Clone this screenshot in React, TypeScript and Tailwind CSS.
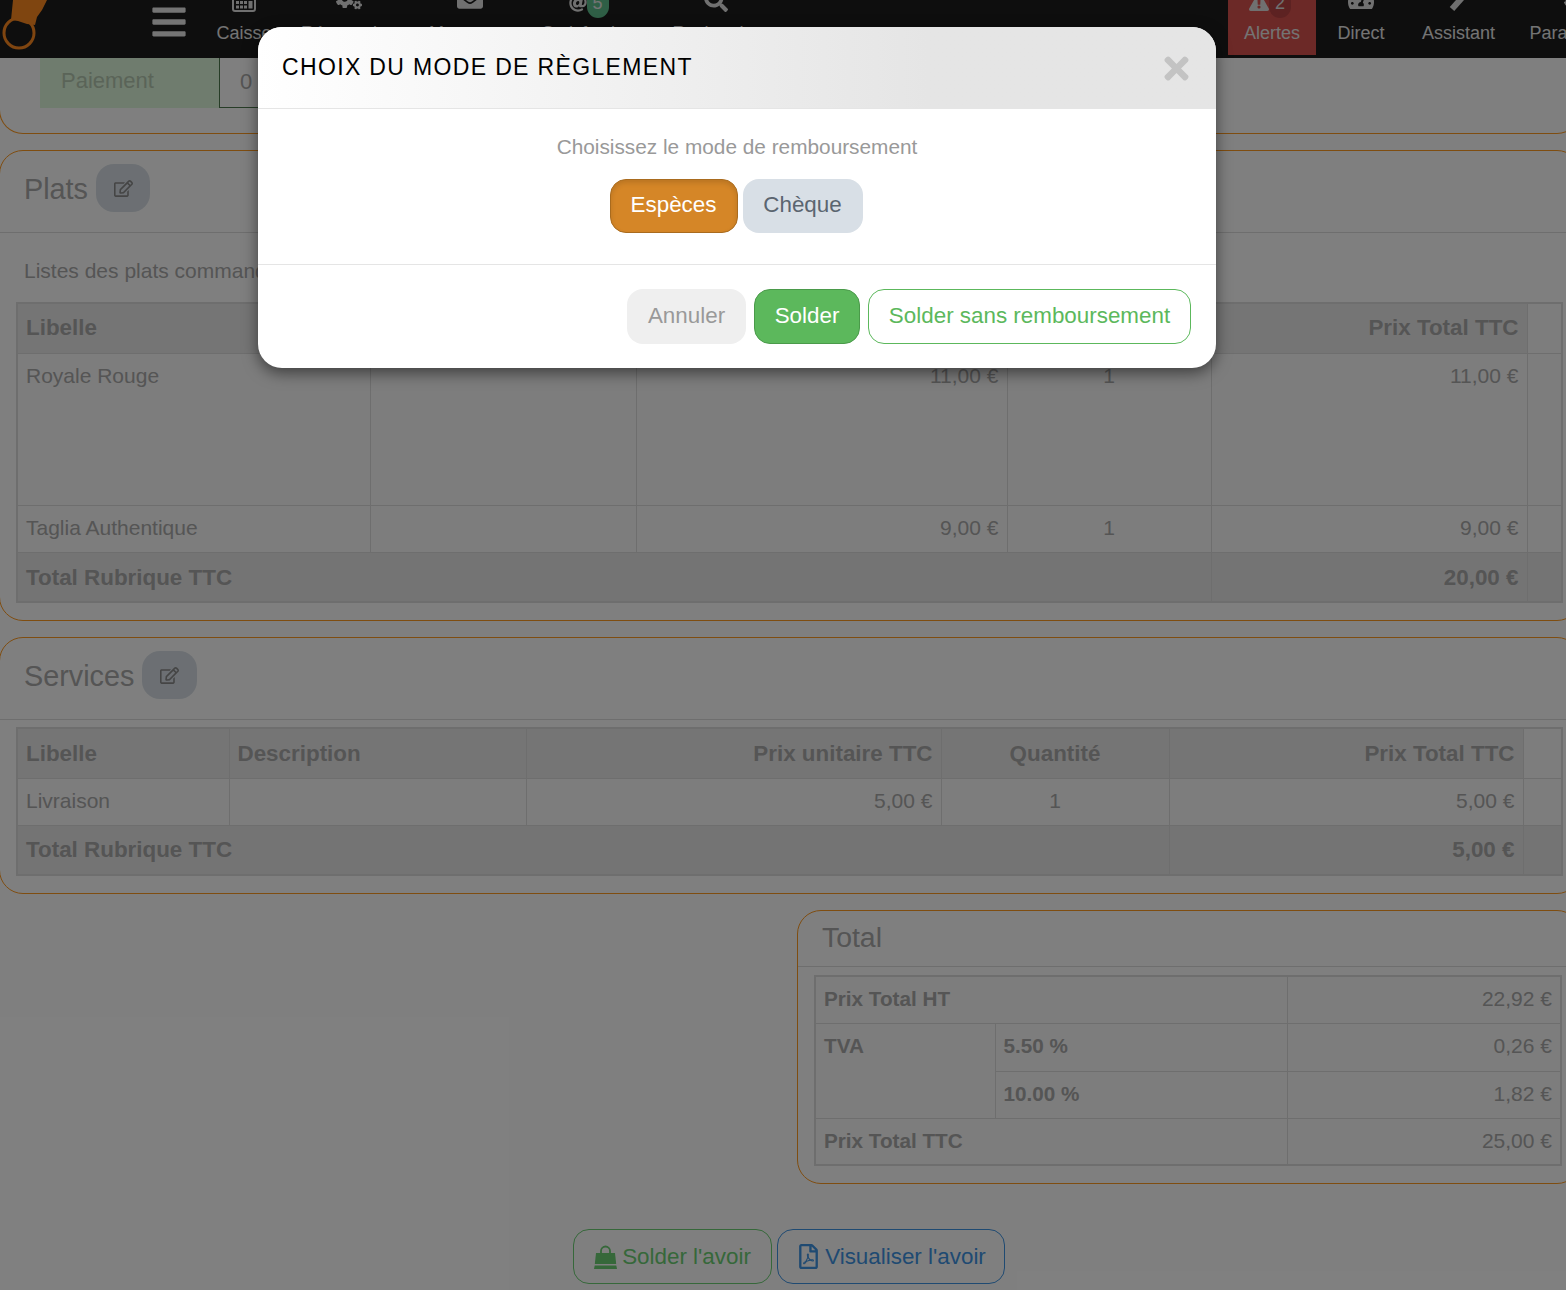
import React from 'react';
import {
  FaAt,
  FaBars,
  FaCogs,
  FaEnvelope,
  FaExclamationTriangle,
  FaRegEdit,
  FaRegFilePdf,
  FaSearch,
  FaTachometerAlt,
  FaTimes,
} from 'react-icons/fa';

const cellBase = 'border border-[#dddddd] px-2 align-middle';
const bodyCell = `${cellBase} pb-[2px]`;
const topCell = `${cellBase} !align-top pt-[7px]`;
const headCell = `${cellBase} bg-[#ebebeb] text-[22.4px] font-bold`;
const totalCell = `${cellBase} bg-[#e9e9e9] text-[22.4px] font-bold`;
const sumLabel = 'text-[20.7px] font-bold';
const tableClass = 'table-fixed border-collapse border-2 border-[#dddddd] bg-[#fafafa] text-[21px] leading-[30px] text-[#aaaaaa]';

const NavItem: React.FC<{ label: string; width: string; active?: boolean; children: React.ReactNode }> = ({ label, width, active, children }) => (
  <div className={`flex h-[55px] shrink-0 flex-col items-center justify-end pb-[11px] ${width} ${active ? 'bg-[#d9534f]' : ''}`}>
    <div className="relative mb-[10px] flex justify-center text-[#e0e0e0]">{children}</div>
    <span className="whitespace-nowrap text-[18px] leading-[22px] text-[#e8e8e8]">{label}</span>
  </div>
);

const Logo = () => (
  <svg width="50" height="58" viewBox="0 0 50 58" className="shrink-0">
    <circle cx="19" cy="33" r="15" fill="none" stroke="#ff8a20" strokeWidth="3" />
    <path d="M13 0 L47 0 L42 10 L37 17 L35 25 L27 24 L18 21 L11 20 Z" fill="#ff8a20" />
  </svg>
);

const CashIcon = () => (
  <svg width="24" height="24" viewBox="0 0 24 24" fill="currentColor">
    <rect x="1" y="1" width="22" height="22" rx="2" fill="none" stroke="currentColor" strokeWidth="2" />
    <rect x="4" y="13" width="3" height="3" />
    <rect x="8" y="13" width="3" height="3" />
    <rect x="12" y="13" width="3" height="3" />
    <rect x="4" y="17.5" width="3" height="3" />
    <rect x="8" y="17.5" width="3" height="3" />
    <rect x="12" y="17.5" width="3" height="3" />
    <rect x="16.5" y="13" width="4" height="7.5" />
  </svg>
);

const WandIcon = () => (
  <svg width="20" height="22" viewBox="0 0 20 22">
    <path d="M19 1 L3 19" stroke="currentColor" strokeWidth="6" />
  </svg>
);

const BagIcon = () => (
  <svg width="23" height="24" viewBox="0 0 23 24" fill="currentColor">
    <path d="M7 9 V6 a4.5 4.5 0 0 1 9 0 V9" fill="none" stroke="currentColor" strokeWidth="1.8" />
    <path d="M2 8 H21 L22.2 19 H0.8 Z" />
    <path d="M0.7 20.5 H22.3 L23 24 H0 Z" />
  </svg>
);

const EditButton: React.FC<{ width: string }> = ({ width }) => (
  <button className={`flex h-12 items-center justify-center rounded-[18px] bg-[#d8dfe6] text-[#8a8a8a] ${width}`}>
    <FaRegEdit size={19} />
  </button>
);

const CardHeader: React.FC<{ title: string; width: string }> = ({ title, width }) => (
  <div className="flex h-[82px] items-start gap-2 border-b border-[#dddddd] pt-[13px] pl-6">
    <h2 className="pt-[9px] text-[28.8px] leading-[32px] font-normal text-[#aaaaaa]">{title}</h2>
    <EditButton width={width} />
  </div>
);

const Nav = () => (
  <nav className="relative flex h-[58px] items-start overflow-hidden bg-[#1c1c1c]">
    <Logo />
    <div className="mt-[3px] w-[150px] shrink-0 pl-[100px] text-[#e8e8e8]">
      <FaBars size={38} />
    </div>
    <NavItem label="Caisse" width="w-[88px]">
      <CashIcon />
    </NavItem>
    <NavItem label="Réservation" width="w-[122px]">
      <FaCogs size={26} />
    </NavItem>
    <NavItem label="Messages" width="w-[120px]">
      <FaEnvelope size={26} />
    </NavItem>
    <NavItem label="Satisfaction" width="w-[117px]">
      <FaAt size={18} className="mr-[22px]" />
      <span className="absolute bottom-[-6px] left-[18px] flex h-[30px] w-[22px] items-center justify-center rounded-[11px] bg-[#5ebe8c] text-[18px] text-[#e8e8e8]">5</span>
    </NavItem>
    <NavItem label="Recherche" width="w-[138px]">
      <FaSearch size={24} />
    </NavItem>
    <div className="ml-[443px] flex gap-[5px]">
      <NavItem label="Alertes" width="w-[88px]" active>
        <FaExclamationTriangle size={20} className="mr-[26px]" />
        <span className="absolute bottom-[-6px] left-[20px] flex h-[30px] w-[22px] items-center justify-center rounded-[11px] bg-[#bb4444] text-[18px] text-[#e0e0e0]">2</span>
      </NavItem>
      <NavItem label="Direct" width="w-[80px]">
        <FaTachometerAlt size={26} />
      </NavItem>
      <NavItem label="Assistant" width="w-[105px]">
        <WandIcon />
      </NavItem>
      <NavItem label="Paramètres" width="w-[120px]">
        <FaCogs size={24} />
      </NavItem>
    </div>
  </nav>
);

const PlatsTable = () => (
  <table className={`${tableClass} ml-[16px] w-[1545px]`}>
    <colgroup>
      <col className="w-[353px]" />
      <col className="w-[266px]" />
      <col className="w-[371px]" />
      <col className="w-[204px]" />
      <col className="w-[316px]" />
      <col className="w-[35px]" />
    </colgroup>
    <tbody>
      <tr className="h-[50px]">
        <th className={`${headCell} text-left`}>Libelle</th>
        <th className={`${headCell} text-left`}>Description</th>
        <th className={`${headCell} text-right`}>Prix unitaire TTC</th>
        <th className={`${headCell} text-center`}>Quantité</th>
        <th className={`${headCell} text-right`}>Prix Total TTC</th>
        <td className={cellBase} />
      </tr>
      <tr className="h-[152px]">
        <td className={topCell}>Royale Rouge</td>
        <td className={cellBase} />
        <td className={`${topCell} text-right`}>11,00 €</td>
        <td className={`${topCell} text-center`}>1</td>
        <td className={`${topCell} text-right`}>11,00 €</td>
        <td className={cellBase} />
      </tr>
      <tr className="h-[47px]">
        <td className={bodyCell}>Taglia Authentique</td>
        <td className={bodyCell} />
        <td className={`${bodyCell} text-right`}>9,00 €</td>
        <td className={`${bodyCell} text-center`}>1</td>
        <td className={`${bodyCell} text-right`}>9,00 €</td>
        <td className={bodyCell} />
      </tr>
      <tr className="h-[50px]">
        <td colSpan={4} className={`${totalCell} pt-[2px]`}>Total Rubrique TTC</td>
        <td className={`${totalCell} pt-[2px] text-right`}>20,00 €</td>
        <td className={totalCell} />
      </tr>
    </tbody>
  </table>
);

const ServicesTable = () => (
  <table className={`${tableClass} ml-[16px] w-[1545px]`}>
    <colgroup>
      <col className="w-[212px]" />
      <col className="w-[297px]" />
      <col className="w-[415px]" />
      <col className="w-[228px]" />
      <col className="w-[354px]" />
      <col className="w-[39px]" />
    </colgroup>
    <tbody>
      <tr className="h-[50px]">
        <th className={`${headCell} pt-[2px] text-left`}>Libelle</th>
        <th className={`${headCell} pt-[2px] text-left`}>Description</th>
        <th className={`${headCell} pt-[2px] text-right`}>Prix unitaire TTC</th>
        <th className={`${headCell} pt-[2px] text-center`}>Quantité</th>
        <th className={`${headCell} pt-[2px] text-right`}>Prix Total TTC</th>
        <td className={cellBase} />
      </tr>
      <tr className="h-[47px]">
        <td className={bodyCell}>Livraison</td>
        <td className={bodyCell} />
        <td className={`${bodyCell} text-right`}>5,00 €</td>
        <td className={`${bodyCell} text-center`}>1</td>
        <td className={`${bodyCell} text-right`}>5,00 €</td>
        <td className={bodyCell} />
      </tr>
      <tr className="h-[50px]">
        <td colSpan={4} className={totalCell}>Total Rubrique TTC</td>
        <td className={`${totalCell} text-right`}>5,00 €</td>
        <td className={totalCell} />
      </tr>
    </tbody>
  </table>
);

const TotalTable = () => (
  <table className={`${tableClass} ml-[16px] w-[746px] text-[21.4px]`}>
    <colgroup>
      <col className="w-[180px]" />
      <col className="w-[292px]" />
      <col className="w-[274px]" />
    </colgroup>
    <tbody>
      <tr className="h-[47px]">
        <td colSpan={2} className={`${bodyCell} ${sumLabel}`}>Prix Total HT</td>
        <td className={`${bodyCell} text-right`}>22,92 €</td>
      </tr>
      <tr className="h-[48px]">
        <td rowSpan={2} className={`${topCell} ${sumLabel}`}>TVA</td>
        <td className={`${bodyCell} ${sumLabel}`}>5.50 %</td>
        <td className={`${bodyCell} text-right`}>0,26 €</td>
      </tr>
      <tr className="h-[47px]">
        <td className={`${bodyCell} ${sumLabel}`}>10.00 %</td>
        <td className={`${bodyCell} text-right`}>1,82 €</td>
      </tr>
      <tr className="h-[47px]">
        <td colSpan={2} className={`${cellBase} ${sumLabel}`}>Prix Total TTC</td>
        <td className={`${cellBase} text-right`}>25,00 €</td>
      </tr>
    </tbody>
  </table>
);

const Modal = () => (
  <div className="absolute top-[27px] left-[258px] w-[958px] overflow-hidden rounded-[24px] bg-white shadow-[0_5px_15px_rgba(0,0,0,0.5)]">
    <div className="flex h-[82px] items-start justify-between border-b border-[#e5e5e5] bg-gradient-to-r from-white to-[#e5e5e5] to-70% pt-[26px] pr-[22px] pl-6">
      <h4 className="text-[23px] leading-[28px] font-normal tracking-[1.35px] text-black">CHOIX DU MODE DE RÈGLEMENT</h4>
      <FaTimes size={35} className="mt-[-2px] text-[#c3c3c3]" />
    </div>
    <div className="flex h-[156px] flex-col items-center border-b border-[#e5e5e5] pt-[23px]">
      <p className="text-[20.8px] leading-[30px] text-[#999999]">Choisissez le mode de remboursement</p>
      <div className="mt-[17px] flex gap-[5px] pr-[2px] pb-[2px] text-[22.4px]">
        <button className="h-[54px] w-[128px] rounded-2xl border border-[#a96b1e] bg-[#d58627] pb-[2px] text-white shadow-[inset_0_3px_5px_rgba(0,0,0,0.125)]">Espèces</button>
        <button className="h-[54px] w-[120px] rounded-2xl bg-[#d8dfe6] pb-[2px] text-[#5b6570]">Chèque</button>
      </div>
    </div>
    <div className="flex h-[103px] items-start justify-end gap-2 pt-6 pr-[25px] text-[22.4px]">
      <button className="h-[55px] w-[119px] rounded-2xl bg-[#efefef] pb-[2px] text-[#999999]">Annuler</button>
      <button className="h-[55px] w-[106px] rounded-2xl border border-[#4a9a4a] bg-[#5cb85c] pb-[2px] text-white">Solder</button>
      <button className="h-[55px] w-[323px] rounded-2xl border border-[#5cb85c] bg-white pb-[2px] text-[#5cb85c]">Solder sans remboursement</button>
    </div>
  </div>
);

export default function App() {
  return (
    <div className="relative h-[1290px] w-[1566px] overflow-hidden bg-white font-['Liberation_Sans',Arial,sans-serif]">
      <Nav />
      <main className="-ml-px w-[1582px]">
        <section className="flex h-[76px] items-start rounded-b-[24px] border-x border-b border-[#ff9a20] pl-[40px] text-[22px]">
          <div className="flex h-[50px] w-[179px] items-center bg-[#dff9dc] pb-[5px] pl-[21px] text-[#b5c8b1]">Paiement</div>
          <div className="flex h-[50px] w-[200px] items-center border-b border-l border-[#4e7a4e] pb-[3px] pl-5 text-[#aaaaaa]">0</div>
        </section>

        <section className="mt-4 h-[471px] rounded-[24px] border border-[#ff9a20]">
          <CardHeader title="Plats" width="w-[54px]" />
          <p className="flex h-[69px] items-center pt-[6px] pl-6 text-[21px] text-[#aaaaaa]">Listes des plats commandés</p>
          <PlatsTable />
        </section>

        <section className="mt-4 h-[257px] rounded-[24px] border border-[#ff9a20]">
          <CardHeader title="Services" width="w-[55px]" />
          <div className="pt-[7px]">
            <ServicesTable />
          </div>
        </section>

        <section className="mt-4 ml-[798px] h-[274px] w-[784px] rounded-[24px] border border-[#ff9a20]">
          <div className="flex h-[56px] items-center border-b border-[#dddddd] pb-[3px] pl-6 text-[28.4px] text-[#aaaaaa]">Total</div>
          <div className="pt-2">
            <TotalTable />
          </div>
        </section>

        <div className="mt-[45px] ml-[574px] flex gap-[5px] text-[22.4px]">
          <button className="flex h-[55px] w-[199px] items-center justify-center gap-[5px] rounded-2xl border border-[#6cd074] text-[#6cd074]">
            <BagIcon />
            Solder l'avoir
          </button>
          <button className="flex h-[55px] w-[228px] items-center justify-center gap-[4px] rounded-2xl border border-[#3e94e4] text-[#3e94e4]">
            <FaRegFilePdf size={25} />
            Visualiser l'avoir
          </button>
        </div>
      </main>

      {/* backdrop + dialog */}
      <div className="absolute inset-0 bg-black/50" />
      <Modal />
    </div>
  );
}
